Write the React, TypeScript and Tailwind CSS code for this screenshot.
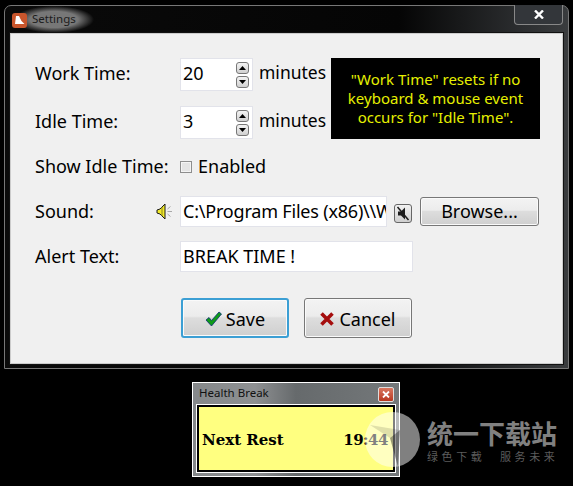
import React from 'react';

const font = "font-['Noto_Sans','Liberation_Sans',sans-serif]";

const Spinner: React.FC = () => (
  <div className="flex flex-col gap-[2px]">
    <div className="w-[13px] h-[12px] rounded-[3px] border border-[#777] bg-gradient-to-b from-[#f4f4f4] to-[#d0d0d0] flex items-center justify-center">
      <svg width="7" height="4" viewBox="0 0 7 4"><path d="M3.5 0L7 4H0z" fill="#000" /></svg>
    </div>
    <div className="w-[13px] h-[12px] rounded-[3px] border border-[#777] bg-gradient-to-b from-[#f4f4f4] to-[#d0d0d0] flex items-center justify-center">
      <svg width="7" height="4" viewBox="0 0 7 4"><path d="M0 0h7L3.500 4z" fill="#000" /></svg>
    </div>
  </div>
);

const TimeRow: React.FC<{ label: string; value: string }> = ({ label, value }) => (
  <div className="flex items-center h-[33px]">
    <span className="w-[145px] shrink-0 pb-[4px]">{label}</span>
    <div className="w-[73px] h-[33px] bg-white border border-[#e2e3ea] flex items-center justify-between pl-[2px] pr-[3px]">
      <span className="pb-[4px]">{value}</span>
      <Spinner />
    </div>
    <span className="ml-[6px] pb-[4px] text-[17.500px]">minutes</span>
  </div>
);

const Speaker: React.FC = () => (
  <svg width="17" height="17" viewBox="0 0 17 17">
    <path d="M1 7l3-1 5-5v15l-5-5-3-1z" fill="#f2ea2a" stroke="#1a1a1a" strokeWidth="1" />
    <path d="M6 4v9" stroke="#8a8420" strokeWidth="1" />
    <path d="M11.500 6l3-2.500M11.500 8.500h4.500M11.500 11l3 2.500" stroke="#a8a8a8" strokeWidth="1" />
  </svg>
);

const MuteButton: React.FC = () => (
  <div className="w-[18px] h-[19px] rounded-[3px] border border-[#666] bg-gradient-to-b from-[#f2f2f2] to-[#cfcfcf] flex items-center justify-center">
    <svg width="14" height="15" viewBox="0 0 14 15">
      <path d="M2 5.500h3l4-4v12l-4-4H2z" fill="#1c1c1c" />
      <path d="M1.500 1L12.500 14" stroke="#1c1c1c" strokeWidth="1.500" />
    </svg>
  </div>
);

const AeroButton: React.FC<{ className: string; children: React.ReactNode }> = ({ className, children }) => (
  <div className={`flex items-center justify-center rounded-[3px] border bg-[linear-gradient(#f3f3f3_0%,#ececec_45%,#dddddd_50%,#cfcfcf_100%)] shadow-[inset_0_0_0_1px_#fafafa] ${className}`}>
    {children}
  </div>
);

export default function App() {
  return (
    <div className={`w-[573px] h-[486px] bg-black overflow-hidden relative ${font} text-[18px] leading-none text-black`}>
      {/* Settings window */}
      <div className="ml-[4px] mt-[5px] w-[565px] h-[364px] rounded-t-[7px] border border-[#777] bg-[linear-gradient(90deg,#0a0a0a_0%,#050505_70%,#2c2e30_92%,#3a3c3e_100%)] flex flex-col">
        <div className="h-[27px] shrink-0 flex items-start justify-between pr-[5px]">
          <div className="flex items-center gap-[5px] pl-[7px] pr-[18px] pt-[1px] h-[27px] text-[11.500px] text-[#1c1c1c] bg-[radial-gradient(ellipse_closest-side_at_55%_50%,#777777_60%,transparent)]">
            <div className="w-[15px] h-[15px] rounded-[3px] bg-[#c8552c] flex items-center justify-center">
              <svg width="11" height="11" viewBox="0 0 11 11"><path d="M2 1h3l2.500 5 3 3H1z" fill="#fff" /></svg>
            </div>
            <span className="pb-[2px]">Settings</span>
          </div>
          <div className="w-[49px] h-[20px] -mt-px rounded-b-[4px] border border-t-0 border-[#888] bg-[#33363a] flex items-center justify-center">
            <svg width="10" height="9" viewBox="0 0 10 9"><path d="M1 0.500l8 8M9 0.500l-8 8" stroke="#fff" strokeWidth="2.400" /></svg>
          </div>
        </div>

        <div className="mx-[5px] h-[331px] border border-[#ccc] outline-1 outline-[#111] bg-[#f0f0f0] pl-[24px] pr-[22px] pt-[24px] flex flex-col">
          <div className="flex items-start">
            <div className="w-[296px] shrink-0 flex flex-col gap-[15px]">
              <TimeRow label="Work Time:" value="20" />
              <TimeRow label="Idle Time:" value="3" />
            </div>
            <div className="w-[209px] h-[81px] shrink-0 bg-black text-[#e6f000] text-[15px] leading-[19px] text-center flex items-center justify-center">
              <span className="whitespace-nowrap">"Work Time" resets if no<br />keyboard &amp; mouse event<br />occurs for "Idle Time".</span>
            </div>
          </div>

          <div className="flex items-center h-[24px] mt-[16px]">
            <span className="w-[145px] shrink-0 pb-[2px]">Show Idle Time:</span>
            <div className="w-[12px] h-[12px] border border-[#8e8e8e] bg-[#e4e4e4] shadow-[inset_0_0_0_1px_#f4f4f4] mr-[6px]" />
            <span className="pb-[2px]">Enabled</span>
          </div>

          <div className="flex items-center h-[31px] mt-[17px]">
            <span className="w-[121px] shrink-0 pb-[2px]">Sound:</span>
            <div className="w-[24px] shrink-0 flex"><Speaker /></div>
            <div className="w-[207px] shrink-0 h-[31px] bg-white border border-[#e2e3ea] flex items-center pl-[2px] pb-[2px] overflow-hidden whitespace-nowrap tracking-[-0.200px]">
              C:\Program Files (x86)\\Windows\Media
            </div>
            <div className="ml-[7px] mt-[3px]"><MuteButton /></div>
            <AeroButton className="ml-[8px] w-[119px] shrink-0 h-[29px] border-[#777] pb-[2px]">Browse...</AeroButton>
          </div>

          <div className="flex items-center h-[31px] mt-[14px]">
            <span className="w-[145px] shrink-0 pb-[2px]">Alert Text:</span>
            <div className="w-[233px] h-[31px] bg-white border border-[#e2e3ea] flex items-center pl-[2px] pb-[2px]">BREAK TIME !</div>
          </div>

          <div className="flex ml-[146px] mt-[26px] gap-[15px]">
            <AeroButton className="w-[108px] h-[40px] border-[#3c9fd4] border-2 gap-[4px] pt-[2px]">
              <svg width="17" height="16" viewBox="0 0 17 16">
                <path d="M1 9l3-2.500 2.500 3L14 1l2.500 2L6.500 15z" fill="#0f9a18" stroke="#0b2a78" strokeWidth="0.800" />
              </svg>
              Save
            </AeroButton>
            <AeroButton className="w-[108px] h-[40px] border-[#777] gap-[5px] pt-[2px]">
              <svg width="14" height="14" viewBox="0 0 14 14">
                <path d="M1.500 1.500L12.500 12.500M12.500 1.500L1.500 12.500" stroke="#a50d0d" strokeWidth="3.600" />
              </svg>
              Cancel
            </AeroButton>
          </div>
        </div>
      </div>

      {/* Health Break window */}
      <div className="ml-[192px] mt-[13px] w-[208px] h-[95px] border border-white bg-[linear-gradient(90deg,#85888a,#8e9092_30%,#666a6c_50%,#74787a)] flex flex-col px-[4px] pb-[4px]">
        <div className="h-[22px] shrink-0 flex items-center justify-between text-[11.500px] text-[#111] pl-[2px] pr-[1px]">
          <span className="pb-[2px]">Health Break</span>
          <div className="w-[16px] h-[15px] rounded-[2px] border border-[#ddd] bg-gradient-to-b from-[#d8765f] to-[#b8361e] flex items-center justify-center">
            <svg width="8" height="7" viewBox="0 0 8 7"><path d="M1 0.500l6 6M7 0.500l-6 6" stroke="#fff" strokeWidth="1.800" /></svg>
          </div>
        </div>
        <div className="flex-1 border-2 border-black outline-1 outline-white bg-[#ffff80] flex items-center justify-between pl-[3px] pr-[5px] pt-[4px] font-['DejaVu_Serif',serif] font-bold text-[15px]">
          <span>Next Rest</span>
          <span className="tracking-[-0.500px]">19:44</span>
        </div>
      </div>

      {/* watermark */}
      <div className="absolute left-[365px] top-[412px] flex items-center gap-[7px]">
        <svg width="55" height="55" viewBox="0 0 55 55">
          <circle cx="27.500" cy="27.500" r="27.500" fill="#fff" fillOpacity="0.5" />
          <path d="M5 13l30 5-10 8z" fill="#000" fillOpacity="0.12" />
          <path d="M35 18l-2 37-8-29z" fill="#000" fillOpacity="0.4" />
        </svg>
        <div className="flex flex-col font-['Noto_Sans_CJK_SC',sans-serif] text-[#808080]">
          <span className="text-[26px] font-bold leading-[32px] whitespace-nowrap">统一下载站</span>
          <span className="text-[11px] leading-[14px] tracking-[3.600px] whitespace-nowrap text-[#5c5c5c]">绿色下载　服务未来</span>
        </div>
      </div>
    </div>
  );
}
